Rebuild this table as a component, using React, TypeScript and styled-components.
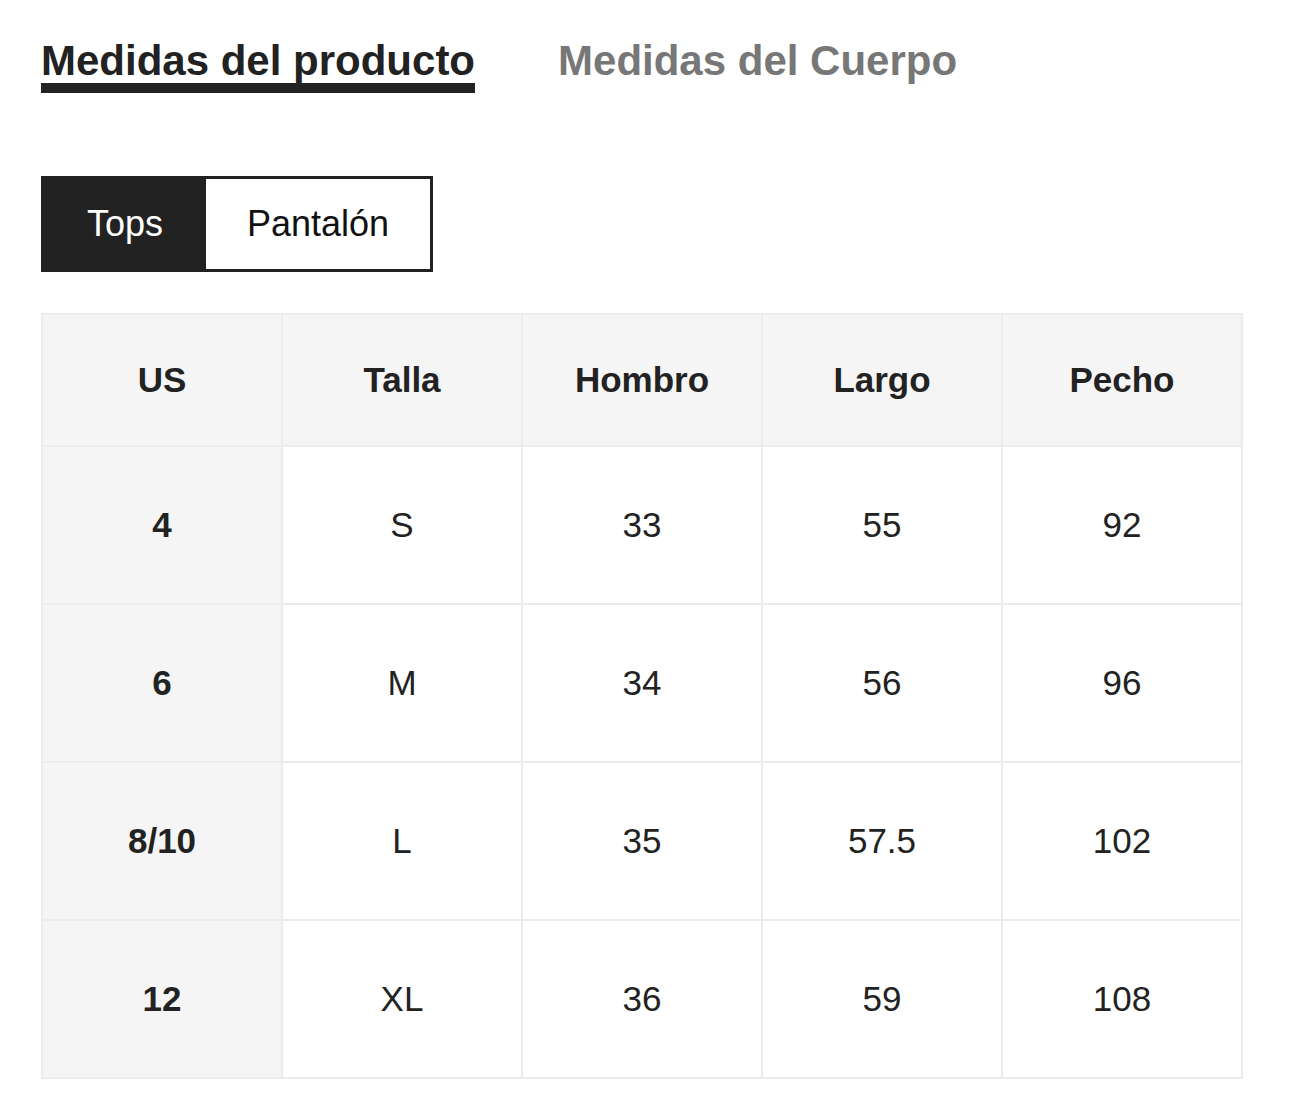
import React, { useState } from "react";
import styled, { createGlobalStyle } from "styled-components";

const Global = createGlobalStyle`
  html, body { margin: 0; padding: 0; background: #fff; }
  body { font-family: "Liberation Sans", Arial, sans-serif; color: #222; }
`;

const Page = styled.div`
  padding: 40px 0 0 41px;
`;

const TabBar = styled.div`
  display: flex;
  gap: 83px;
`;

const Tab = styled.div<{ $active: boolean }>`
  display: flex;
  flex-direction: column;
  font-size: 42px;
  line-height: 42px;
  font-weight: 700;
  color: ${(p) => (p.$active ? "#222" : "#777")};
  cursor: pointer;
  &::after {
    content: "";
    display: block;
    height: 10px;
    margin-top: 1px;
    background: ${(p) => (p.$active ? "#222" : "transparent")};
  }
`;

const Toggle = styled.div`
  display: inline-flex;
  margin-top: 83px;
  border: 3px solid #222;
  height: 90px;
  box-sizing: content-box;
`;

const Segment = styled.div<{ $active: boolean; $w: number }>`
  width: ${(p) => p.$w}px;
  display: flex;
  align-items: center;
  justify-content: center;
  font-size: 36px;
  background: ${(p) => (p.$active ? "#222" : "#fff")};
  color: ${(p) => (p.$active ? "#fff" : "#111")};
  cursor: pointer;
`;

const Table = styled.table`
  margin-top: 41px;
  border-collapse: collapse;
  width: 1202px;
  table-layout: fixed;
`;

const Th = styled.th`
  height: 130px;
  border: 2px solid #ececec;
  background: #f5f5f5;
  font-size: 35px;
  font-weight: 700;
  color: #222;
  text-align: center;
  padding: 0;
`;

const Td = styled.td<{ $head?: boolean }>`
  height: 156px;
  border: 2px solid #ececec;
  background: ${(p) => (p.$head ? "#f5f5f5" : "#fff")};
  font-size: 35px;
  font-weight: ${(p) => (p.$head ? 700 : 400)};
  color: #222;
  text-align: center;
  padding: 0;
`;

const headers = ["US", "Talla", "Hombro", "Largo", "Pecho"];
const rows = [
  ["4", "S", "33", "55", "92"],
  ["6", "M", "34", "56", "96"],
  ["8/10", "L", "35", "57.5", "102"],
  ["12", "XL", "36", "59", "108"],
];

export default function App() {
  const [tab, setTab] = useState(0);
  const [seg, setSeg] = useState(0);
  return (
    <Page>
      <Global />
      <TabBar>
        <Tab $active={tab === 0} onClick={() => setTab(0)}>Medidas del producto</Tab>
        <Tab $active={tab === 1} onClick={() => setTab(1)}>Medidas del Cuerpo</Tab>
      </TabBar>
      <Toggle>
        <Segment $w={162} $active={seg === 0} onClick={() => setSeg(0)}>Tops</Segment>
        <Segment $w={224} $active={seg === 1} onClick={() => setSeg(1)}>Pantalón</Segment>
      </Toggle>
      <Table>
        <thead>
          <tr>
            {headers.map((h) => (
              <Th key={h}>{h}</Th>
            ))}
          </tr>
        </thead>
        <tbody>
          {rows.map((r) => (
            <tr key={r[0]}>
              {r.map((c, i) => (
                <Td key={i} $head={i === 0}>{c}</Td>
              ))}
            </tr>
          ))}
        </tbody>
      </Table>
    </Page>
  );
}
